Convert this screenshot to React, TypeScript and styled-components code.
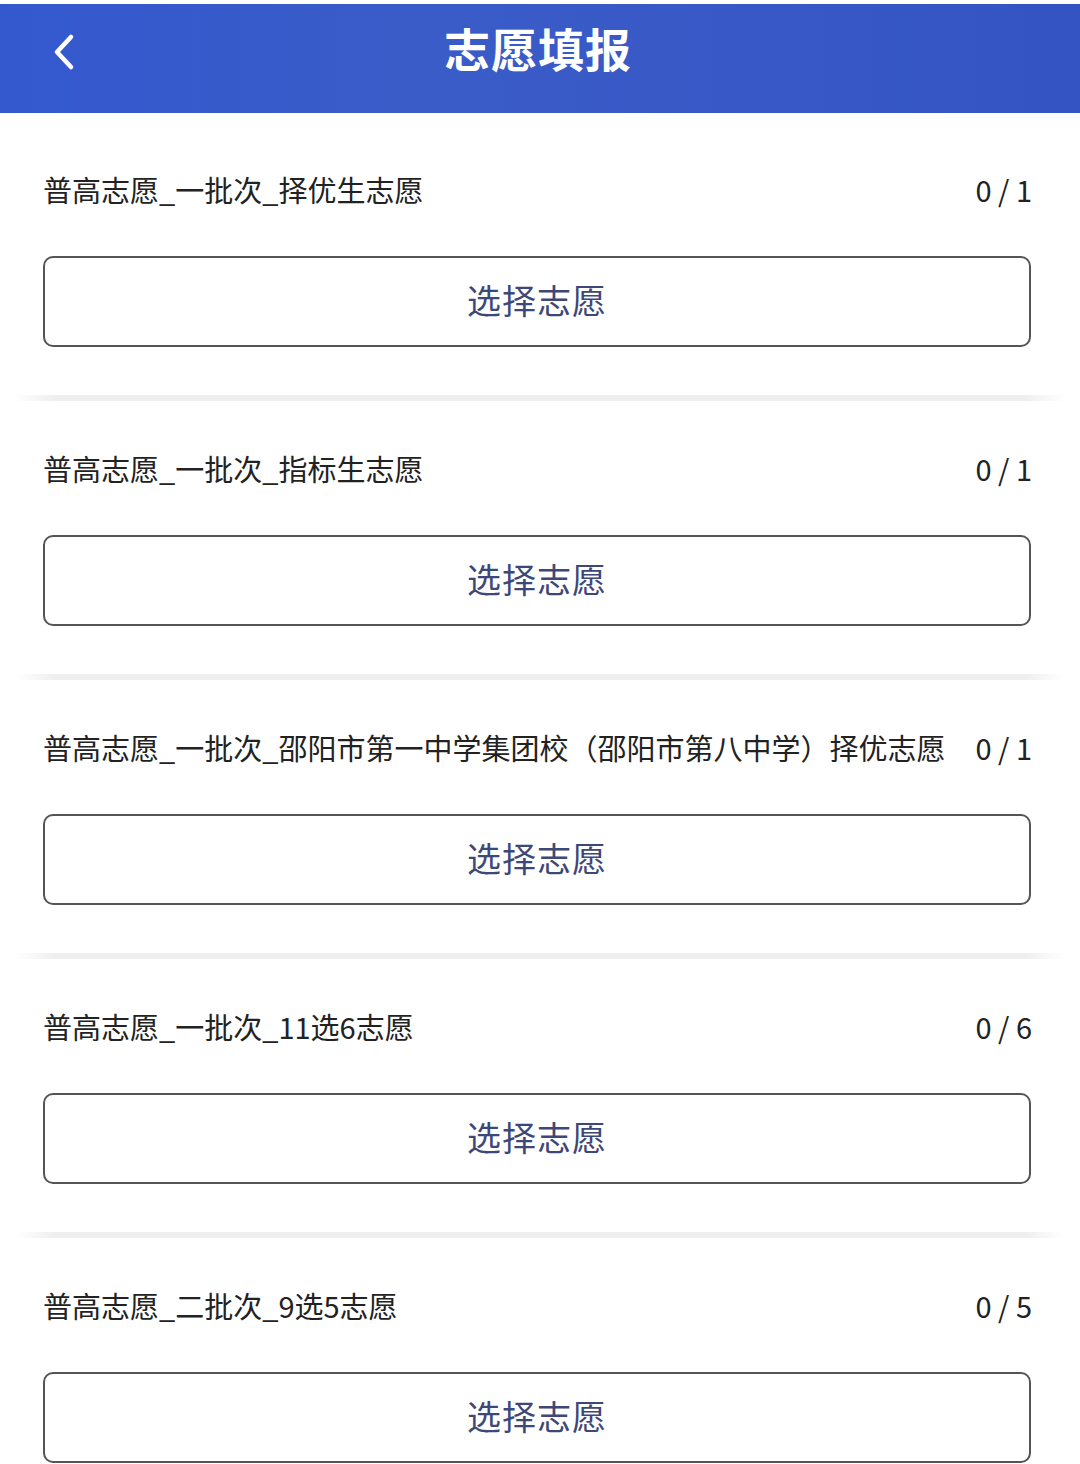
import * as React from "react";
import styled, { createGlobalStyle } from "styled-components";

const GlobalStyle = createGlobalStyle`
    html, body {
        margin: 0;
        padding: 0;
        background: #ffffff;
        font-family: "Noto Sans CJK SC", "Noto Sans", sans-serif;
    }
`;

interface Choice {
    title: string;
    picked: number;
    total: number;
}

const choices: Choice[] = [
    { title: "普高志愿_一批次_择优生志愿", picked: 0, total: 1 },
    { title: "普高志愿_一批次_指标生志愿", picked: 0, total: 1 },
    { title: "普高志愿_一批次_邵阳市第一中学集团校（邵阳市第八中学）择优志愿", picked: 0, total: 1 },
    { title: "普高志愿_一批次_11选6志愿", picked: 0, total: 6 },
    { title: "普高志愿_二批次_9选5志愿", picked: 0, total: 5 },
];

const App: React.FunctionComponent = (): JSX.Element => {
    return (
        <>
            <GlobalStyle />
            <Page>
                <Header>
                    <BackButton aria-label="back">
                        <svg width="24" height="38" viewBox="0 0 24 38">
                            <polyline points="19,4 5,19 19,34" fill="none" stroke="#ffffff" strokeWidth="4.5" strokeLinecap="round" strokeLinejoin="round" />
                        </svg>
                    </BackButton>
                    <HeaderTitle>志愿填报</HeaderTitle>
                </Header>
                <List>
                    {choices.map((item, index) => (
                        <Section key={index} first={index === 0}>
                            <SectionHead>
                                <SectionTitle>{item.title}</SectionTitle>
                                <Count>{item.picked} / {item.total}</Count>
                            </SectionHead>
                            <PickButton>选择志愿</PickButton>
                            {index < choices.length - 1 && <Divider />}
                        </Section>
                    ))}
                </List>
            </Page>
        </>
    );
};

export default App;

const Page = styled.div`
    width: 1080px;
    height: 1464px;
    overflow: hidden;
    padding-top: 4px;
    box-sizing: border-box;
    background: #ffffff;
`;

const Header = styled.div`
    position: relative;
    height: 109px;
    padding-bottom: 24px;
    box-sizing: border-box;
    display: flex;
    align-items: center;
    justify-content: center;
    background: linear-gradient(to right, #3459cf, #3a5cc8 40%, #3454c4);
`;

const BackButton = styled.div`
    position: absolute;
    left: 52px;
    top: 29px;
    display: flex;
`;

const HeaderTitle = styled.div`
    color: #ffffff;
    font-size: 46px;
    font-weight: 700;
    letter-spacing: 1px;
    line-height: 1;
    margin-left: -4px;
`;

const List = styled.div`
    display: flex;
    flex-direction: column;
`;

const Section = styled.div<{ first?: boolean }>`
    display: flex;
    flex-direction: column;
    padding: ${props => (props.first ? "56px" : "47px")} 49px 0 43px;
`;

const SectionHead = styled.div`
    display: flex;
    align-items: center;
    justify-content: space-between;
    height: 40px;
`;

const SectionTitle = styled.div`
    color: #222222;
    font-size: 29px;
    line-height: 40px;
    white-space: nowrap;
`;

const Count = styled.div`
    color: #222222;
    font-size: 29px;
    line-height: 40px;
    white-space: pre;
    margin-right: -1px;
`;

const PickButton = styled.div`
    margin-top: 47px;
    height: 91px;
    box-sizing: border-box;
    padding-bottom: 5px;
    border: 2px solid #555555;
    border-radius: 10px;
    display: flex;
    align-items: center;
    justify-content: center;
    color: #3e4878;
    font-size: 34px;
    letter-spacing: 1px;
`;

const Divider = styled.div`
    height: 6px;
    margin: 48px -34px 0 -28px;
    background: linear-gradient(to right, rgba(238, 238, 238, 0), #eeeeee 4%, #eeeeee 96%, rgba(238, 238, 238, 0));
`;
